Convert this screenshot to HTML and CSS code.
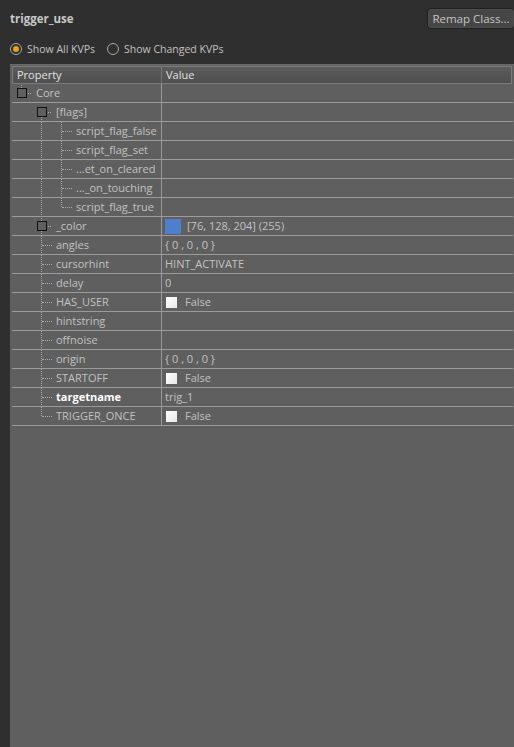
FILE: index.html
```html
<!DOCTYPE html>
<html>
<head>
<meta charset="utf-8">
<link rel="stylesheet" href="styles.css">
</head>
<body>
<div class="top">
  <div class="title">trigger_use</div>
  <button class="remap">Remap Class...</button>
</div>
<div class="filters">
  <label class="radio"><span class="dot on"></span>Show All KVPs</label>
  <label class="radio"><span class="dot"></span>Show Changed KVPs</label>
</div>
<div class="panel">
  <div class="head">
    <div class="hc">Property</div>
    <div class="hc hv">Value</div>
  </div>
  <div class="row">
    <div class="prop"><span class="g box up"></span><span class="name">Core</span></div>
    <div class="val"></div>
  </div>
  <div class="row">
    <div class="prop"><span class="g"></span><span class="g box down"></span><span class="name">[flags]</span></div>
    <div class="val"></div>
  </div>
  <div class="row">
    <div class="prop"><span class="g"></span><span class="g line"></span><span class="g tee"></span><span class="name">script_flag_false</span></div>
    <div class="val"></div>
  </div>
  <div class="row">
    <div class="prop"><span class="g"></span><span class="g line"></span><span class="g tee"></span><span class="name">script_flag_set</span></div>
    <div class="val"></div>
  </div>
  <div class="row">
    <div class="prop"><span class="g"></span><span class="g line"></span><span class="g tee"></span><span class="name">...et_on_cleared</span></div>
    <div class="val"></div>
  </div>
  <div class="row">
    <div class="prop"><span class="g"></span><span class="g line"></span><span class="g tee"></span><span class="name">..._on_touching</span></div>
    <div class="val"></div>
  </div>
  <div class="row">
    <div class="prop"><span class="g"></span><span class="g line"></span><span class="g end"></span><span class="name">script_flag_true</span></div>
    <div class="val"></div>
  </div>
  <div class="row">
    <div class="prop"><span class="g"></span><span class="g box up down"></span><span class="name">_color</span></div>
    <div class="val"><span class="swatch"></span><span class="sv">[76, 128, 204] (255)</span></div>
  </div>
  <div class="row">
    <div class="prop"><span class="g"></span><span class="g tee"></span><span class="name">angles</span></div>
    <div class="val">{ 0 , 0 , 0 }</div>
  </div>
  <div class="row">
    <div class="prop"><span class="g"></span><span class="g tee"></span><span class="name">cursorhint</span></div>
    <div class="val">HINT_ACTIVATE</div>
  </div>
  <div class="row">
    <div class="prop"><span class="g"></span><span class="g tee"></span><span class="name">delay</span></div>
    <div class="val">0</div>
  </div>
  <div class="row">
    <div class="prop"><span class="g"></span><span class="g tee"></span><span class="name">HAS_USER</span></div>
    <div class="val"><span class="check"></span>False</div>
  </div>
  <div class="row">
    <div class="prop"><span class="g"></span><span class="g tee"></span><span class="name">hintstring</span></div>
    <div class="val"></div>
  </div>
  <div class="row">
    <div class="prop"><span class="g"></span><span class="g tee"></span><span class="name">offnoise</span></div>
    <div class="val"></div>
  </div>
  <div class="row">
    <div class="prop"><span class="g"></span><span class="g tee"></span><span class="name">origin</span></div>
    <div class="val">{ 0 , 0 , 0 }</div>
  </div>
  <div class="row">
    <div class="prop"><span class="g"></span><span class="g tee"></span><span class="name">STARTOFF</span></div>
    <div class="val"><span class="check"></span>False</div>
  </div>
  <div class="row">
    <div class="prop"><span class="g"></span><span class="g tee"></span><span class="name bold">targetname</span></div>
    <div class="val">trig_1</div>
  </div>
  <div class="row">
    <div class="prop"><span class="g"></span><span class="g end"></span><span class="name">TRIGGER_ONCE</span></div>
    <div class="val"><span class="check"></span>False</div>
  </div>
</div>
</body>
</html>
```
FILE: styles.css
```css
html, body {
  margin: 0;
  padding: 0;
  height: 100%;
}
body {
  background: #2f2f2f;
  font-family: "Open Sans", "Noto Sans", sans-serif;
  font-size: 11px;
  color: #c2c2c2;
  display: flex;
  flex-direction: column;
  overflow: hidden;
}
.top {
  display: flex;
  justify-content: space-between;
  align-items: center;
  padding: 8px 0 0 10px;
  height: 21px;
}
.title {
  font-weight: bold;
  font-size: 11.5px;
  color: #c8c8c8;
  margin-top: -1px;
}
.remap {
  height: 21px;
  width: 88px;
  margin-right: -1px;
  background: #464646;
  border: 1px solid #1f1f1f;
  border-radius: 4px;
  color: #c4c4c4;
  font-family: inherit;
  font-size: 11.5px;
  padding: 0;
  box-shadow: inset 0 0 0 1px #4e4e4e;
}
.filters {
  display: flex;
  gap: 12px;
  padding: 14px 0 0 10px;
  height: 21px;
  font-size: 10.5px;
}
.radio {
  display: flex;
  align-items: flex-start;
  gap: 5px;
  line-height: 13px;
}
.dot {
  width: 10px;
  height: 10px;
  border: 1px solid #a8a8a8;
  border-radius: 50%;
  box-sizing: content-box;
  position: relative;
  background: #2f2f2f;
}
.dot.on::after {
  content: "";
  position: absolute;
  left: 2px;
  top: 2px;
  width: 6px;
  height: 6px;
  border-radius: 50%;
  background: #f3a10c;
}
.panel {
  flex: 1;
  margin-left: 10px;
  background: #5f5f5f;
  border-top: 1px solid #6a6a6a;
  padding: 1px 1px 0 1px;
}
.head {
  display: grid;
  grid-template-columns: 148px 1fr;
  height: 16px;
  border: 1px solid #7c7c7c;
  background: linear-gradient(#5b5b5b, #4f4f4f);
  color: #e2e2e2;
  margin: 0 1px;
}
.hc {
  padding-left: 4px;
  line-height: 16px;
}
.hv {
  border-left: 1px solid #787878;
}
.row {
  display: grid;
  grid-template-columns: 150px 1fr;
  height: 18px;
  border-bottom: 1px solid #9b9b9b;
  margin-left: 1px;
}
.prop {
  display: flex;
  align-items: stretch;
  border-right: 1px solid #9b9b9b;
  overflow: hidden;
  white-space: nowrap;
}
.name {
  margin-left: 4px;
  line-height: 18px;
}
.name.bold {
  font-weight: bold;
  color: #ffffff;
}
.g {
  width: 20px;
  flex: none;
  position: relative;
}
.g.line::before,
.g.tee::before,
.g.end::before,
.g.box.up::before,
.g.box.down::after {
  content: "";
  position: absolute;
  left: 9px;
  border-left: 1px dotted #a9a9a9;
}
.g.line::before, .g.tee::before {
  top: 0;
  bottom: -1px;
}
.g.end::before {
  top: 0;
  height: 9px;
}
.g.tee::after,
.g.end::after {
  content: "";
  position: absolute;
  left: 10px;
  right: 0;
  top: 9px;
  border-top: 1px dotted #a9a9a9;
}
.g.box.up::before {
  top: -2px;
  height: 6px;
}
.g.box.down::after {
  top: 14px;
  bottom: -1px;
}
.g.box {
  background:
    linear-gradient(#111, #111) 5px 4px / 10px 1px no-repeat,
    linear-gradient(#111, #111) 5px 13px / 10px 1px no-repeat,
    linear-gradient(#111, #111) 5px 4px / 1px 10px no-repeat,
    linear-gradient(#111, #111) 14px 4px / 1px 10px no-repeat,
    repeating-linear-gradient(90deg, #a9a9a9 0 1px, transparent 1px 2px) 16px 9px / 4px 1px no-repeat;
}
.val {
  display: flex;
  align-items: center;
  padding-left: 3px;
  line-height: 18px;
  white-space: nowrap;
}
.swatch {
  width: 16px;
  height: 15px;
  background: rgb(76, 128, 204);
  margin-right: 6px;
}
.check {
  width: 11px;
  height: 11px;
  background: linear-gradient(135deg, #ffffff, #e8e8e8);
  margin: 0 8px 0 1px;
}
```
